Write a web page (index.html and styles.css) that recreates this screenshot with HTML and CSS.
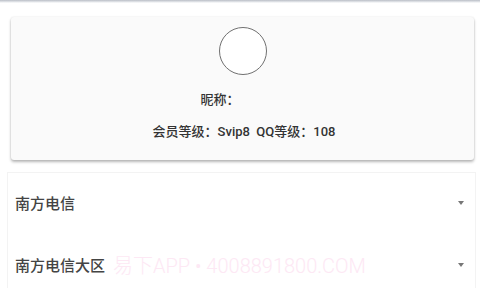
FILE: index.html
```html
<!DOCTYPE html>
<html lang="zh-CN">
<head>
<meta charset="utf-8">
<link rel="stylesheet" href="styles.css">
</head>
<body>
<div class="topbar"></div>
<div class="card">
  <div class="avatar"></div>
  <div class="nick">昵称：</div>
  <div class="level">会员等级：Svip8&nbsp;&nbsp;QQ等级：108</div>
</div>
<div class="panel">
  <div class="row"><span class="label">南方电信</span><span class="arrow"></span></div>
  <div class="row"><span class="label">南方电信大区</span><span class="arrow"></span></div>
  <div class="watermark">易下APP • 4008891800.COM</div>
</div>
</body>
</html>
```
FILE: styles.css
```css
html, body {
  margin: 0;
  padding: 0;
  background: #ffffff;
  width: 480px;
  height: 288px;
  overflow: hidden;
  font-family: Roboto, "Noto Sans CJK SC", sans-serif;
}
.topbar {
  height: 3px;
  background: linear-gradient(#b9bec6, #e9ebee 70%, #ffffff);
}
.card {
  margin: 14px 6px 0 11px;
  height: 143px;
  box-sizing: border-box;
  background: #fafafa;
  border-radius: 3px;
  box-shadow: 0 2px 3px rgba(0, 0, 0, 0.28), 0 0 2px rgba(0, 0, 0, 0.1);
  padding-top: 10px;
  display: flex;
  flex-direction: column;
  align-items: center;
}
.avatar {
  width: 48px;
  height: 48px;
  box-sizing: border-box;
  border-radius: 50%;
  border: 1.5px solid #707070;
  background: #ffffff;
}
.nick {
  margin-top: 15px;
  height: 20px;
  line-height: 20px;
  font-size: 13px;
  font-weight: 500;
  color: #333;
  padding-right: 45px;
}
.level {
  margin-top: 12px;
  height: 20px;
  line-height: 20px;
  font-size: 13px;
  font-weight: 500;
  color: #333;
  padding-left: 3px;
}
.panel {
  position: relative;
  margin: 12px 4px 0 7px;
  border: 1px solid #f3f3f3;
  border-bottom: none;
  background: #fff;
}
.row {
  height: 62px;
  box-sizing: border-box;
  display: flex;
  align-items: center;
  justify-content: space-between;
  padding: 0 11px 4px 7px;
}
.label {
  font-size: 15px;
  font-weight: 500;
  color: #444;
}
.arrow {
  width: 0;
  height: 0;
  margin-top: 2px;
  border-left: 3.5px solid transparent;
  border-right: 3.5px solid transparent;
  border-top: 4px solid #777;
}
.watermark {
  position: absolute;
  left: 105px;
  top: 77px;
  font-size: 20px;
  font-weight: 300;
  color: #fde8f4;
  white-space: nowrap;
}
```
